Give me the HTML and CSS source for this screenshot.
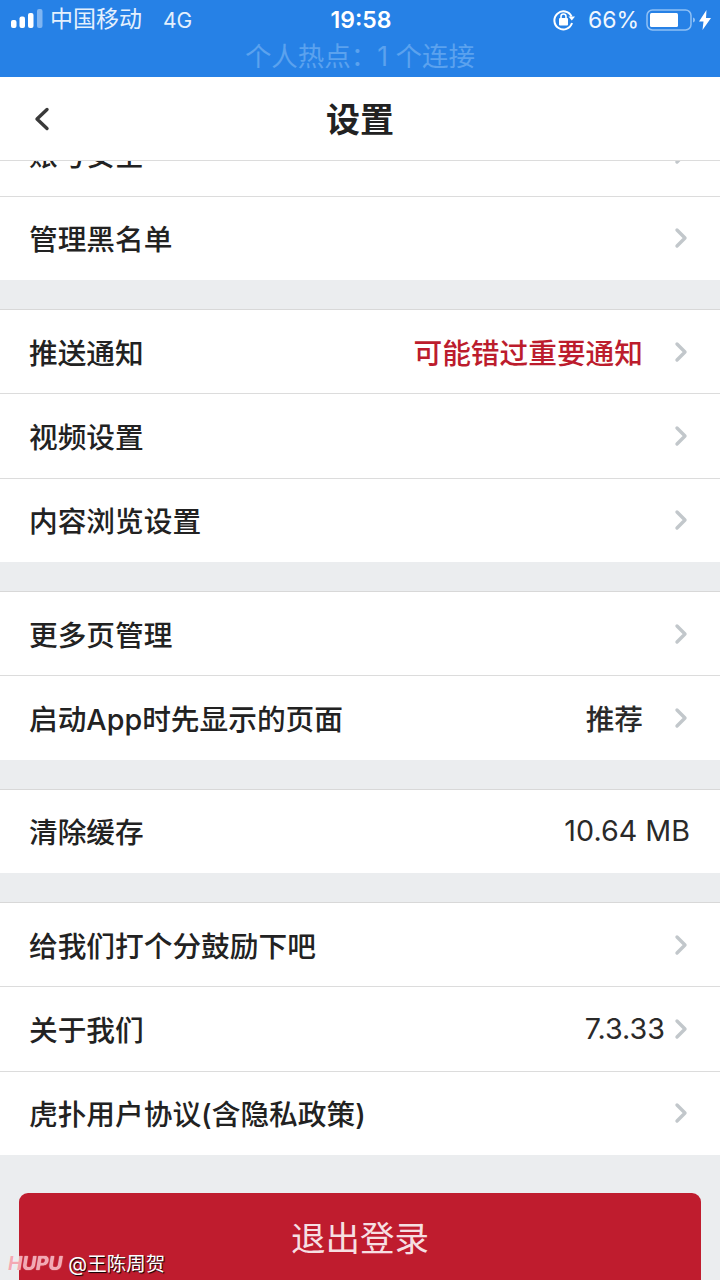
FILE: index.html
```html
<!DOCTYPE html>
<html lang="zh">
<head>
<meta charset="utf-8">
<title>设置</title>
<link rel="stylesheet" href="styles.css">
</head>
<body>
<div class="screen">
  <header class="status">
    <div class="status-main">
      <div class="status-left">
        <svg class="signal" width="32" height="20" viewBox="0 0 32 20"><rect x="0" y="11" width="5.5" height="8" rx="2" fill="#fff"/><rect x="8.5" y="7.5" width="5.5" height="11.5" rx="2" fill="#fff"/><rect x="17" y="4" width="5.5" height="15" rx="2" fill="#fff"/><rect x="26" y="0" width="5.5" height="19" rx="2" fill="#7fb5f2"/></svg>
        <span class="carrier">中国移动</span>
        <span class="net">4G</span>
      </div>
      <div class="clock">19:58</div>
      <div class="status-right">
        <svg class="lock" width="24" height="24" viewBox="0 0 24 24"><path d="M19.5 8.5A9 9 0 1 0 20 15" fill="none" stroke="#fff" stroke-width="2"/><path d="M16.5 8.5h6.500l-3.200 4z" fill="#fff"/><rect x="7" y="10" width="9" height="7.500" rx="1" fill="#fff"/><path d="M9 10V8.500a2.500 2.500 0 0 1 5 0V10" fill="none" stroke="#fff" stroke-width="1.600"/></svg>
        <span class="pct">66%</span>
        <svg class="battery" width="50" height="24" viewBox="0 0 50 24"><rect x="1" y="2" width="44" height="20" rx="5.500" fill="none" stroke="#8fc0f5" stroke-width="1.500"/><rect x="4" y="5" width="28" height="14" rx="1.500" fill="#fff"/><path d="M47 9.500c1.500.5 2 1.500 2 2.500s-.5 2-2 2.500z" fill="#8fc0f5"/></svg>
        <svg class="bolt" width="12" height="20" viewBox="0 0 12 20"><path d="M7.500 0 0 11.500h4.500L3.500 20 12 8H7z" fill="#fff"/></svg>
      </div>
    </div>
    <div class="hotspot">个人热点：1 个连接</div>
  </header>

  <nav class="nav">
    <svg class="back" width="18" height="24" viewBox="0 0 18 24"><path d="M14 2.500 4 12l10 9.500" fill="none" stroke="#3a3a3a" stroke-width="3.400" stroke-linecap="round" stroke-linejoin="round"/></svg>
    <h1 class="title">设置</h1>
  </nav>

  <main class="scroller">
    <div class="content">
      <section class="group group-first">
        <div class="row"><span class="label">账号安全</span><svg class="chev" viewBox="0 0 14 22"><path d="M3 3l8 8-8 8" /></svg></div>
        <div class="row"><span class="label">管理黑名单</span><svg class="chev" viewBox="0 0 14 22"><path d="M3 3l8 8-8 8" /></svg></div>
      </section>
      <section class="group">
        <div class="row"><span class="label">推送通知</span><span class="value value-alert">可能错过重要通知</span><svg class="chev" viewBox="0 0 14 22"><path d="M3 3l8 8-8 8" /></svg></div>
        <div class="row"><span class="label">视频设置</span><svg class="chev" viewBox="0 0 14 22"><path d="M3 3l8 8-8 8" /></svg></div>
        <div class="row"><span class="label">内容浏览设置</span><svg class="chev" viewBox="0 0 14 22"><path d="M3 3l8 8-8 8" /></svg></div>
      </section>
      <section class="group">
        <div class="row"><span class="label">更多页管理</span><svg class="chev" viewBox="0 0 14 22"><path d="M3 3l8 8-8 8" /></svg></div>
        <div class="row"><span class="label">启动App时先显示的页面</span><span class="value">推荐</span><svg class="chev" viewBox="0 0 14 22"><path d="M3 3l8 8-8 8" /></svg></div>
      </section>
      <section class="group">
        <div class="row"><span class="label">清除缓存</span><span class="value value-end">10.64 MB</span></div>
      </section>
      <section class="group">
        <div class="row"><span class="label">给我们打个分鼓励下吧</span><svg class="chev" viewBox="0 0 14 22"><path d="M3 3l8 8-8 8" /></svg></div>
        <div class="row"><span class="label">关于我们</span><span class="value value-near">7.3.33</span><svg class="chev" viewBox="0 0 14 22"><path d="M3 3l8 8-8 8" /></svg></div>
        <div class="row"><span class="label">虎扑用户协议(含隐私政策)</span><svg class="chev" viewBox="0 0 14 22"><path d="M3 3l8 8-8 8" /></svg></div>
      </section>
      <button class="logout">退出登录</button>
    </div>
  </main>

  <div class="watermark"><span class="wm-brand">HUPU</span><span class="wm-user">@王陈周贺</span></div>
</div>
</body>
</html>
```
FILE: styles.css
```css
* { box-sizing: border-box; }
html, body { margin: 0; padding: 0; }
body {
  font-family: Inter, "Noto Sans CJK SC", sans-serif;
  background: #ebedef;
  color: #222;
}
.screen {
  position: relative;
  width: 720px;
  height: 1280px;
  overflow: hidden;
  display: flex;
  flex-direction: column;
}
.status {
  height: 77px;
  flex: none;
  background: #2681e6;
  color: #fff;
}
.status-main {
  height: 38px;
  padding: 2px 9px 0 11px;
  display: grid;
  grid-template-columns: 1fr auto 1fr;
  align-items: center;
}
.status-left { display: flex; align-items: center; }
.signal { margin-right: 7px; margin-top: -2px; }
.carrier { font-size: 23px; line-height: 30px; padding-bottom: 3px; color: #e4f0fd; }
.net { font-size: 21px; margin-left: 21px; color: #e4f0fd; }
.clock { font-size: 23px; font-weight: 600; }
.status-right { display: flex; align-items: center; justify-content: flex-end; }
.lock { margin-right: 12px; }
.pct { font-size: 23px; margin-right: 7px; color: #f0f6fe; }
.battery { margin-right: 3px; }
.hotspot {
  padding-top: 2px;
  text-align: center;
  font-size: 26.500px;
  line-height: 32px;
  color: #5ba2ee;
}
.nav {
  position: relative;
  z-index: 1;
  height: 84px;
  flex: none;
  background: #fff;
  border-bottom: 1px solid #dcdcdc;
  display: flex;
  align-items: center;
  justify-content: center;
}
.back { position: absolute; left: 33px; top: 30px; }
.title {
  margin: 2px 0 0;
  font-size: 34px;
  font-weight: 700;
  line-height: 1;
  color: #222;
}
.scroller { flex: 1; min-height: 0; overflow: hidden; }
.content { margin-top: -49.500px; }
.group {
  background: #fff;
  border-top: 1px solid #d8d8d8;
  margin-bottom: 29px;
}
.row {
  height: 84.340px;
  display: flex;
  align-items: center;
  padding: 0 32px 1px 29px;
  border-top: 1px solid #dcdcdc;
  font-size: 28.700px;
  font-weight: 500;
}
.row:first-child { border-top: 0; height: 83.340px; }
.label { flex: 1; white-space: nowrap; color: #222; }
.value { white-space: nowrap; margin-right: 31px; color: #2a2a2a; }
.value-alert { color: #bc1c2d; }
.value-end { margin-right: -2px; font-weight: 400; }
.value-near { margin-right: 9px; font-weight: 400; }
.chev {
  width: 14px;
  height: 22px;
  flex: none;
  margin-bottom: -1px;
  fill: none;
  stroke: #c2c7cb;
  stroke-width: 3.400;
  stroke-linecap: round;
  stroke-linejoin: round;
}
.logout {
  display: block;
  width: 682px;
  height: 110px;
  margin: 38px 0 0 19px;
  padding: 0 0 24px;
  border: 0;
  border-radius: 9px;
  background: #bf1c2e;
  color: #f6dfe2;
  font-family: inherit;
  font-size: 34.500px;
}
.watermark {
  position: absolute;
  left: 8px;
  top: 1253px;
  display: flex;
  align-items: center;
  gap: 6px;
  line-height: 22px;
}
.wm-brand {
  font-size: 19px;
  font-weight: 700;
  font-style: italic;
  color: #f3a9b3;
  text-shadow: 0 0 1px #fff;
}
.wm-user {
  font-size: 19.500px;
  color: #fff;
  text-shadow: 1px 1px 1px #000;
}
```
